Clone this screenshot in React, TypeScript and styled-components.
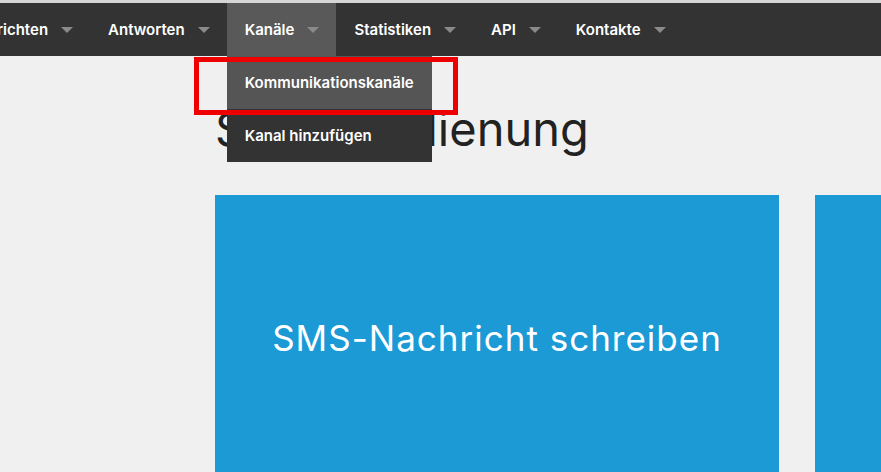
import React from "react";
import styled, { createGlobalStyle } from "styled-components";

const Global = createGlobalStyle`
  html, body { margin: 0; padding: 0; background: #f0f0f0; overflow: hidden; }
  body { font-family: Inter, Lato, sans-serif; }
`;

const Page = styled.div`
  position: relative;
  width: 881px;
  height: 472px;
  overflow: hidden;
  background: #f0f0f0;
`;

const TopStrip = styled.div`
  height: 3px;
  background: #d6d6d6;
`;

const NavBar = styled.nav`
  height: 53px;
  background: #333333;
  display: flex;
  position: relative;
  z-index: 2;
`;

const Menu = styled.ul`
  display: flex;
  margin: 0 0 0 -59px;
  padding: 0;
  list-style: none;
`;

const NavItem = styled.li<{ $active?: boolean }>`
  position: relative;
  display: flex;
  align-items: center;
  gap: 13px;
  height: 53px;
  padding: 0 17px 0 18px;
  background: ${(p) => (p.$active ? "#595959" : "transparent")};
  color: #ffffff;
  font-size: 15px;
  font-weight: 600;
  white-space: nowrap;
`;

const Caret = styled.span`
  width: 0;
  height: 0;
  border-left: 6px solid transparent;
  border-right: 6px solid transparent;
  border-top: 6px solid #8a8a8a;
  margin-top: 1px;
`;

const Dropdown = styled.ul`
  position: absolute;
  top: 100%;
  left: 0;
  width: 205px;
  margin: 0;
  padding: 0;
  list-style: none;
  background: #333333;
`;

const DropItem = styled.li<{ $hover?: boolean }>`
  height: 53px;
  display: flex;
  align-items: center;
  padding-left: 18px;
  background: ${(p) => (p.$hover ? "#555555" : "#333333")};
  color: #ffffff;
  font-size: 15px;
  font-weight: 600;
  white-space: nowrap;
`;

const Main = styled.main`
  padding: 43px 0 0 215px;
`;

const Heading = styled.h1`
  margin: 0 0 36px 0;
  font-family: Inter, Lato, sans-serif;
  font-weight: 400;
  font-size: 47px;
  line-height: 60px;
  color: #222222;
  white-space: nowrap;
`;

const CardRow = styled.div`
  display: flex;
  gap: 36px;
`;

const Card = styled.div`
  flex: 0 0 564px;
  height: 285px;
  background: #1b9ad6;
  color: #ffffff;
  display: flex;
  align-items: center;
  justify-content: center;
  font-size: 35px;
  letter-spacing: 1px;
  font-weight: 400;
`;

const Annotation = styled.div`
  position: absolute;
  left: 194px;
  top: 57px;
  width: 264px;
  height: 58px;
  box-sizing: border-box;
  border: 5px solid #ee0000;
  z-index: 3;
  pointer-events: none;
`;

const navItems = ["Nachrichten", "Antworten", "Kanäle", "Statistiken", "API", "Kontakte"];

export default function App() {
  return (
    <Page>
      <Global />
      <TopStrip />
      <NavBar>
        <Menu>
          {navItems.map((label) => (
            <NavItem key={label} $active={label === "Kanäle"}>
              {label}
              <Caret />
              {label === "Kanäle" && (
                <Dropdown>
                  <DropItem $hover>Kommunikationskanäle</DropItem>
                  <DropItem>Kanal hinzufügen</DropItem>
                </Dropdown>
              )}
            </NavItem>
          ))}
        </Menu>
      </NavBar>
      <Main>
        <Heading>Selbstbedienung</Heading>
        <CardRow>
          <Card>SMS-Nachricht schreiben</Card>
          <Card>E-Mail schreiben</Card>
        </CardRow>
      </Main>
      <Annotation />
    </Page>
  );
}
